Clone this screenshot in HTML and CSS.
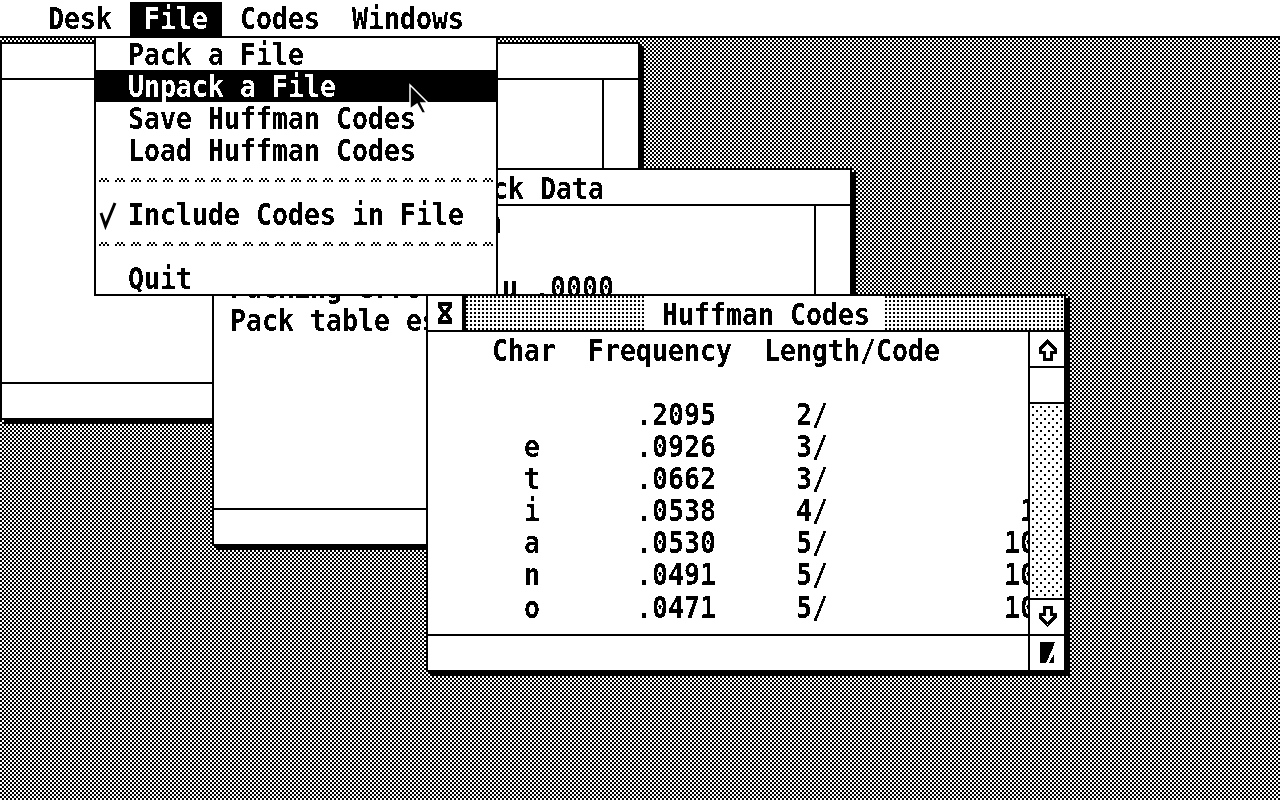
FILE: index.html
```html
<!DOCTYPE html>
<html lang="en">
<head>
  <meta charset="UTF-8">
  <title>Huffman Codes</title>
  <link rel="stylesheet" href="styles.css">
</head>
<body>
  <!-- snaps text edges to black or white, like the 1-bit original -->
  <svg class="defs" width="0" height="0">
    <filter id="mono" x="0" y="0" width="100%" height="100%">
      <feComponentTransfer>
        <feFuncA type="discrete" tableValues="0 0 1 1"></feFuncA>
      </feComponentTransfer>
    </filter>
  </svg>

  <div class="menubar">
    <div class="menu-title"><span class="txt">Desk</span></div>
    <div class="menu-title open"><span class="txt">File</span></div>
    <div class="menu-title"><span class="txt">Codes</span></div>
    <div class="menu-title"><span class="txt">Windows</span></div>
  </div>

  <div class="window win-stats">
    <div class="titlebar"></div>
    <div class="pane">
      <div class="content"></div>
      <div class="vbar"></div>
    </div>
    <div class="footer"></div>
  </div>

  <div class="window win-pack">
    <div class="titlebar"><span class="txt">Pack Data</span></div>
    <div class="pane">
      <div class="content log">
<pre class="txt">
Huffman tables in

Packing error    u .0000
Pack table est</pre>
      </div>
      <div class="vbar"></div>
    </div>
    <div class="footer"></div>
  </div>

  <div class="window win-codes">
    <div class="titlebar">
      <div class="closebox">
        <svg width="34" height="34" viewBox="0 0 34 34">
          <path d="M10 6H24V11L20 17L24 23V28H10V23L14 17L10 11Z" fill="#000"/>
          <path d="M14 10H20L17 15Z M14 24H20L17 19Z" fill="#fff"/>
        </svg>
      </div>
      <div class="dots"></div>
      <div class="title-text"><span class="txt">Huffman Codes</span></div>
      <div class="dots"></div>
    </div>
    <div class="pane">
      <div class="content table">
<pre class="txt">    Char  Frequency  Length/Code

             .2095     2/
      e      .0926     3/
      t      .0662     3/
      i      .0538     4/            1
      a      .0530     5/           10
      n      .0491     5/           10
      o      .0471     5/           10</pre>
      </div>
      <div class="vbar">
        <div class="sbtn">
          <svg width="34" height="34" viewBox="0 0 34 34"><path d="M17.5 9.5L25 17V20H21V27H14V20H10V17Z" fill="none" stroke="#000" stroke-width="3"/></svg>
        </div>
        <div class="slider"></div>
        <div class="track"></div>
        <div class="sbtn down">
          <svg width="34" height="34" viewBox="0 0 34 34"><path d="M17.5 24.5L25 17V14H21V7H14V14H10V17Z" fill="none" stroke="#000" stroke-width="3"/></svg>
        </div>
      </div>
    </div>
    <div class="footer">
      <div class="resize">
        <svg width="34" height="34" viewBox="0 0 34 34"><path d="M10 6H25L22 14L16 27H10Z M24 18V27H19Z" fill="#000"/></svg>
      </div>
    </div>
  </div>

  <div class="dropdown">
    <div class="item"><span class="txt">Pack a File</span></div>
    <div class="item active"><span class="txt">Unpack a File</span></div>
    <div class="item"><span class="txt">Save Huffman Codes</span></div>
    <div class="item"><span class="txt">Load Huffman Codes</span></div>
    <div class="sep"></div>
    <div class="item">
      <svg class="check" width="24" height="32" viewBox="0 0 24 32"><path d="M5 15L9.5 28L19 5" fill="none" stroke="#000" stroke-width="3"/></svg>
      <span class="txt">Include Codes in File</span>
    </div>
    <div class="sep"></div>
    <div class="item"><span class="txt">Quit</span></div>
  </div>

  <svg class="cursor" width="24" height="34" viewBox="0 0 24 34">
    <path d="M2 2L20 20H13L18 30H14L9 21L2 26Z" fill="#000" stroke="#fff" stroke-width="1.5"/>
  </svg>
</body>
</html>
```

FILE: styles.css
```css
html, body {
  margin: 0;
  height: 100%;
}
body {
  position: relative;
  width: 1280px;
  height: 800px;
  overflow: hidden;
  background-color: #fff;
  background-image: url("data:image/svg+xml,%3Csvg xmlns='http://www.w3.org/2000/svg' width='4' height='4' shape-rendering='crispEdges'%3E%3Crect width='2' height='2'/%3E%3Crect x='2' y='2' width='2' height='2'/%3E%3C/svg%3E");
  color: #000;
}
.defs {
  position: absolute;
}
.txt {
  display: block;
  margin: 0;
  font-family: "DejaVu Sans Mono", monospace;
  font-size: 26.58px;
  font-weight: bold;
  line-height: 28.07px;
  white-space: pre;
  transform: scaleY(1.14);
  transform-origin: 0 0;
  filter: url(#mono);
}

/* menu bar */
.menubar {
  display: flex;
  height: 36px;
  padding-left: 32px;
  background: #fff;
  border-bottom: 2px solid #000;
}
.menu-title {
  padding: 3px 16px 0;
}
.menu-title.open {
  margin: 2px 2px 0;
  padding: 1px 14px 0;
  background: #000;
  color: #fff;
}

/* windows */
.window {
  position: absolute;
  display: flex;
  flex-direction: column;
  box-sizing: border-box;
  width: 640px;
  height: 378px;
  background: #fff;
  border: 2px solid #000;
  box-shadow: 4px 4px 0 #000;
}
.win-stats {
  left: 0;
  top: 42px;
}
.win-pack {
  left: 212px;
  top: 168px;
}
.win-codes {
  left: 426px;
  top: 294px;
}
.titlebar {
  display: flex;
  justify-content: center;
  flex: none;
  height: 34px;
  border-bottom: 2px solid #000;
}
.titlebar > .txt {
  margin-top: 3px;
}
.closebox {
  flex: none;
  width: 34px;
  height: 34px;
  border-right: 4px solid #000;
}
.closebox svg, .sbtn svg, .resize svg {
  display: block;
  shape-rendering: crispEdges;
}
.dots {
  flex: 1;
  background-color: #fff;
  background-image: url("data:image/svg+xml,%3Csvg xmlns='http://www.w3.org/2000/svg' width='4' height='4' shape-rendering='crispEdges'%3E%3Crect width='2' height='2'/%3E%3C/svg%3E");
}
.title-text {
  flex: none;
  box-sizing: border-box;
  width: 240px;
  padding: 3px 0 0 17px;
}
.pane {
  display: flex;
  flex: none;
  height: 302px;
  border-bottom: 2px solid #000;
}
.content {
  flex: 1;
  overflow: hidden;
}
.log {
  padding: 1px 0 0 16px;
}
.log .txt {
  line-height: 28.5px;
}
.table {
  padding-top: 3px;
}
.vbar {
  display: flex;
  flex-direction: column;
  flex: none;
  width: 34px;
  border-left: 2px solid #000;
}
.sbtn {
  flex: none;
  height: 34px;
  border-bottom: 2px solid #000;
}
.sbtn.down {
  border-top: 2px solid #000;
  border-bottom: 0;
}
.slider {
  flex: none;
  height: 34px;
  border-bottom: 2px solid #000;
}
.track {
  flex: 1;
  background-color: #fff;
  background-image: url("data:image/svg+xml,%3Csvg xmlns='http://www.w3.org/2000/svg' width='8' height='8' shape-rendering='crispEdges'%3E%3Crect x='2' y='2' width='2' height='2'/%3E%3Crect x='6' y='6' width='2' height='2'/%3E%3C/svg%3E");
}
.footer {
  display: flex;
  justify-content: flex-end;
  flex: 1;
}
.resize {
  width: 34px;
  border-left: 2px solid #000;
}

/* open File menu */
.dropdown {
  position: absolute;
  left: 94px;
  top: 36px;
  box-sizing: border-box;
  width: 404px;
  height: 260px;
  background: #fff;
  border: 2px solid #000;
}
.item {
  position: relative;
  box-sizing: border-box;
  height: 32px;
  padding: 1px 0 0 32px;
}
.item.active {
  background: #000;
  color: #fff;
}
.check {
  position: absolute;
  left: 0;
  top: 0;
}
.sep {
  height: 32px;
  margin: 0 2px;
  background-repeat: repeat-x;
  background-position: 0 12px;
  background-image: url("data:image/svg+xml,%3Csvg xmlns='http://www.w3.org/2000/svg' width='16' height='4' shape-rendering='crispEdges'%3E%3Crect x='3' width='2' height='2'/%3E%3Crect x='7' width='2' height='2'/%3E%3Crect x='1' y='2' width='2' height='2'/%3E%3Crect x='5' y='2' width='2' height='2'/%3E%3Crect x='9' y='2' width='2' height='2'/%3E%3C/svg%3E");
}

.cursor {
  position: absolute;
  left: 408px;
  top: 83px;
}
```
